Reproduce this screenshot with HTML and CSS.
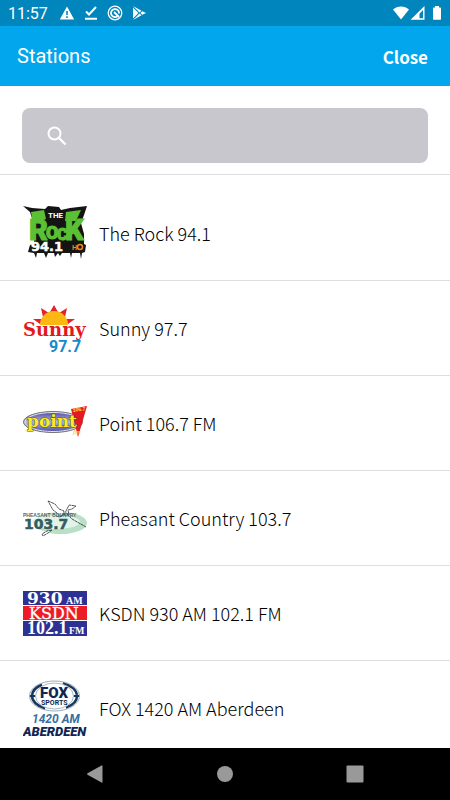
FILE: index.html
```html
<!DOCTYPE html>
<html lang="en">
<head>
    <meta charset="UTF-8">
    <meta name="viewport" content="width=device-width, initial-scale=1.0">
    <title>Stations</title>
    <link rel="stylesheet" href="styles.css">
</head>
<body>
    <div class="status-bar">
        <span class="time">11:57</span>
        <div class="status-icons">
            <svg width="16" height="16" viewBox="0 0 16 16"><path fill="#fff" fill-rule="evenodd" d="M8 1.5L15.2 14.5H.8zM7.2 6v4h1.6V6zM7.2 11.3v1.6h1.6v-1.6z"/></svg>
            <svg width="16" height="16" viewBox="0 0 16 16"><path fill="none" stroke="#fff" stroke-width="2" d="M3 6.5l3 3L13 2M2 13.8h12"/></svg>
            <svg width="16" height="16" viewBox="0 0 16 16"><g fill="none" stroke="#fff"><circle cx="8" cy="8" r="6.8" stroke-width="1.3"/><path stroke-width="1.8" d="M10.5 11.2A4 4 0 1 1 12 8.5"/><path stroke-width="1.8" d="M7 7l5 5"/></g></svg>
            <svg width="16" height="16" viewBox="0 0 16 16"><path fill="#fff" d="M2 1l8.5 4.7-2 1.9zM2 15l8.5-4.7-2-1.9zM2 2.5L7.4 8 2 13.5zM11.3 6.2L15 8l-3.7 1.8L9.4 8z"/></svg>
        </div>
        <div class="signal-icons">
            <svg width="16" height="16" viewBox="0 0 16 16"><path fill="#fff" d="M0 4.5C4.5.6 11.5.6 16 4.5L8 14.5z"/></svg>
            <svg width="16" height="16" viewBox="0 0 16 16"><path fill="#fff" fill-rule="evenodd" d="M14.5 1v13.8H.5zM13 5v8.3H9.5V8.8z"/></svg>
            <svg class="battery" width="10" height="16" viewBox="0 0 10 16"><path fill="#fff" d="M3 1h4v1.5h1.2q.8 0 .8.8v10.7q0 .8-.8.8H1.8q-.8 0-.8-.8V3.3q0-.8.8-.8H3z"/></svg>
        </div>
    </div>

    <header>
        <h1>Stations</h1>
        <button class="close-btn">Close</button>
    </header>

    <form class="search">
        <label class="search-box">
            <svg width="20" height="20" viewBox="0 0 20 20"><circle cx="7.5" cy="7.5" r="6" fill="none" stroke="#fff" stroke-width="2"/><path stroke="#fff" stroke-width="2.4" d="M12 12l6.5 6.5"/></svg>
            <input type="text" aria-label="Search stations">
        </label>
    </form>

    <ul class="stations">
        <li>
            <a href="#">
                <svg class="logo" viewBox="0 0 64 64">
                    <path fill="#141414" d="M0 5l9 2 13 1 3-3 11 1 2 3 9-2 17-2-3 9-3 8 3 11v10l2 1-1 7-3 1-1 6-1-6-8 0-1 5-1-5-8 0-2 3-2-3-3 4-1-4-6 0-2 5-2-5-7 0-1 5-2-5-6-1 2-7 4-1 1-16-5-16z"/>
                    <path fill="#5bc034" d="M8 11l13-2 2 9-13 5zM42 20l1-9 15-2-5 11z"/>
                    <g font-family="Roboto, sans-serif" font-weight="900" fill="#5bc034" stroke="#5bc034" stroke-width="1">
                        <text x="6" y="39" font-size="29">R</text>
                        <text x="23" y="38" font-size="18">O</text>
                        <text x="34" y="39" font-size="16">C</text>
                        <text x="42" y="39" font-size="29">K</text>
                    </g>
                    <text x="25" y="17" font-size="8" font-weight="bold" fill="#fff" font-family="Roboto, sans-serif">THE</text>
                    <text x="8" y="50" font-size="13" font-weight="bold" fill="#fff" stroke="#fff" stroke-width=".5" font-family="'DejaVu Sans', sans-serif">94.1</text>
                    <text x="49" y="49" font-size="7" font-weight="bold" fill="#f0861c" font-family="'Liberation Sans', sans-serif">H</text>
                    <circle cx="57" cy="46" r="2.5" fill="none" stroke="#f0861c" stroke-width="1.5"/>
                </svg>
                <span>The Rock 94.1</span>
            </a>
        </li>
        <li>
            <a href="#">
                <svg class="logo" viewBox="0 0 64 64">
                    <path fill="#e5202a" d="M31 9l-4 7h8zM18 12l2 9 6-4zM44 12l-8 5 6 4zM10 23l7 5 3-5zM52 23l-10 0 3 5z"/>
                    <path fill="#fcb712" d="M17 29a14 14 0 0 1 28 0z"/>
                    <text x="0" y="40" font-size="18" font-weight="bold" fill="#e3171f" stroke="#fff" stroke-width="1" paint-order="stroke" font-family="'DejaVu Serif', serif">Sunny</text>
                    <text x="26" y="56" font-size="16" font-weight="bold" fill="#1689cc" font-family="Roboto, sans-serif">97.7</text>
                </svg>
                <span>Sunny 97.7</span>
            </a>
        </li>
        <li>
            <a href="#">
                <svg class="logo" viewBox="0 0 64 64">
                    <defs>
                        <linearGradient id="point-fill" x1="0" y1="0" x2="0" y2="1">
                            <stop offset="0" stop-color="#45459d"/>
                            <stop offset=".5" stop-color="#b9b9e6"/>
                            <stop offset="1" stop-color="#42429b"/>
                        </linearGradient>
                    </defs>
                    <ellipse cx="30" cy="31" rx="29.5" ry="10.5" fill="url(#point-fill)" stroke="#77766c" stroke-width="1"/>
                    <ellipse cx="30" cy="31" rx="28" ry="9.5" fill="none" stroke="#e5e4ee" stroke-width="1"/>
                    <path fill="#e21b23" d="M48 18l16-3-9 31z"/>
                    <text x="4" y="36" font-size="17" font-weight="bold" fill="#ffea29" stroke="#55552a" stroke-width="1" paint-order="stroke" font-family="'DejaVu Serif', serif">point</text>
                    <text x="50" y="21" font-size="5" font-weight="bold" fill="#ffe632" font-family="'Liberation Sans', sans-serif" transform="rotate(-8 50 21)">106.7</text>
                    <text x="50" y="43" font-size="7" font-weight="bold" font-style="italic" fill="#f6d91c" font-family="'Liberation Serif', serif">fm</text>
                </svg>
                <span>Point 106.7 FM</span>
            </a>
        </li>
        <li>
            <a href="#">
                <svg class="logo" viewBox="0 0 64 64">
                    <ellipse cx="38" cy="37" rx="26" ry="11" fill="#b9dfc7"/>
                    <ellipse cx="33" cy="36" rx="24" ry="7" fill="#e2f3e7"/>
                    <g fill="#fff" stroke="#282828" stroke-width=".8" stroke-dasharray="3 .5">
                        <path d="M25 15l7 3 4 5 5 2-1 4-3 2-3-4-4-3zM41 29l5-10 7 1-4 3-4 1 1 5zM30 28l6 3 8-4"/>
                        <path fill="none" d="M44 28l5 5 14 8"/>
                        <path d="M29 44l-4 3-5 3-1-2 5-3z"/>
                    </g>
                    <text x="0" y="31" font-size="5" font-weight="bold" fill="#4e6a68" font-family="'Liberation Sans', sans-serif">PHEASANT COUNTRY</text>
                    <text x="1" y="43" font-size="14" font-weight="bold" fill="#315d61" stroke="#315d61" stroke-width=".5" font-family="'DejaVu Sans', sans-serif">103.7</text>
                </svg>
                <span>Pheasant Country 103.7</span>
            </a>
        </li>
        <li>
            <a href="#">
                <svg class="logo" viewBox="0 0 64 64">
                    <path fill="#2e3193" d="M0 10h64v14H0zM0 40h64v15H0z"/>
                    <path fill="#ed1c24" d="M0 25h64v14H0z"/>
                    <g fill="#fff" font-family="'DejaVu Serif', serif">
                        <text x="4" y="23" font-size="17" font-weight="bold">930</text>
                        <text x="43" y="23" font-size="10" font-weight="bold" font-family="'Liberation Serif', serif">AM</text>
                        <text x="6" y="38" font-size="16" stroke="#fff" stroke-width=".3">KSDN</text>
                        <text x="4" y="53" font-size="18" font-weight="bold" font-family="'Liberation Serif', serif">102.1</text>
                        <text x="46" y="53" font-size="10" font-weight="bold" font-family="'Liberation Serif', serif">FM</text>
                    </g>
                </svg>
                <span>KSDN 930 AM 102.1 FM</span>
            </a>
        </li>
        <li>
            <a href="#">
                <svg class="logo" viewBox="0 0 64 64">
                    <ellipse cx="31.5" cy="20" rx="25" ry="15" fill="#fff" stroke="#9cabb8" stroke-width="1"/>
                    <ellipse cx="31.5" cy="20" rx="22.5" ry="13.5" fill="none" stroke="#17375f" stroke-width="2.5" stroke-dasharray="17 21 35 21 19"/>
                    <path stroke="#17375f" stroke-width="2" d="M7 20h7M49 20h7"/>
                    <ellipse cx="31.5" cy="20" rx="19" ry="13" fill="#fff" stroke="#a7b8c7" stroke-width="1"/>
                    <g font-family="Roboto, sans-serif" font-weight="bold" fill="#102653">
                        <text x="17" y="22" font-size="15" font-weight="900">FOX</text>
                        <text x="18" y="29" font-size="7">SPORTS</text>
                        <text x="9" y="47" font-size="12" font-style="italic" fill="#376f9e">1420 AM</text>
                        <text x="0" y="60" font-size="13" font-style="italic" font-weight="900">ABERDEEN</text>
                    </g>
                </svg>
                <span>FOX 1420 AM Aberdeen</span>
            </a>
        </li>
    </ul>

    <nav class="nav-bar">
        <button aria-label="Back"><svg width="18" height="18" viewBox="0 0 18 18"><path fill="#999" d="M1.5 8.2L15.5.4q1-.4 1 .6v16q0 1-1 .6L1.5 9.8q-1-.8 0-1.6z"/></svg></button>
        <button aria-label="Home"><svg width="18" height="18" viewBox="0 0 18 18"><circle cx="9" cy="9" r="8" fill="#999"/></svg></button>
        <button aria-label="Recent apps"><svg width="18" height="18" viewBox="0 0 18 18"><rect x=".5" y=".5" width="17" height="17" rx="1" fill="#999"/></svg></button>
    </nav>
</body>
</html>
```
FILE: styles.css
```css
* {
    margin: 0;
    padding: 0;
    box-sizing: border-box;
}
body {
    display: flex;
    flex-direction: column;
    height: 100vh;
    overflow: hidden;
    background-color: #fff;
    color: #000;
    font-family: "Noto Sans CJK SC", "Noto Sans", sans-serif;
}
button {
    background: none;
    border: none;
    cursor: pointer;
}
svg {
    display: block;
}
.status-bar {
    flex: none;
    display: flex;
    align-items: center;
    height: 26px;
    padding: 0 8px;
    background-color: #0085bd;
    color: #fff;
}
.time {
    font-family: Roboto, sans-serif;
    font-size: 16px;
}
.status-icons {
    display: flex;
    gap: 8px;
    margin-left: 11px;
}
.signal-icons {
    display: flex;
    gap: 1px;
    margin-left: auto;
}
.battery {
    margin-left: 5px;
}
header {
    flex: none;
    display: flex;
    justify-content: space-between;
    align-items: center;
    height: 60px;
    padding: 0 22px 0 17px;
    background-color: #02a6ec;
    color: #fff;
}
h1 {
    font-family: Roboto, sans-serif;
    font-size: 20px;
    font-weight: normal;
}
.close-btn {
    color: #fff;
    font-family: inherit;
    font-size: 17px;
    font-weight: bold;
}
.search {
    flex: none;
    padding: 22px 22px 11px;
    border-bottom: 1px solid #dedede;
}
.search-box {
    display: flex;
    align-items: center;
    gap: 12px;
    height: 55px;
    padding: 0 25px;
    border-radius: 8px;
    background-color: #c7c7cd;
}
.search-box input {
    flex: 1;
    min-width: 0;
    background: none;
    border: none;
    outline: none;
    color: #fff;
    font-family: inherit;
    font-size: 18px;
}
.stations {
    flex: 1;
    min-height: 0;
    overflow: hidden;
    padding-top: 11px;
    list-style: none;
}
.stations li {
    height: 95px;
    border-bottom: 1px solid #dedede;
}
.stations a {
    display: flex;
    align-items: center;
    gap: 12px;
    height: 100%;
    padding: 0 23px;
    color: inherit;
    font-size: 18px;
    font-weight: 300;
    text-decoration: none;
}
.logo {
    flex: none;
    width: 64px;
    height: 64px;
}
.nav-bar {
    flex: none;
    display: flex;
    justify-content: space-around;
    align-items: center;
    height: 52px;
    padding: 0 30px;
    background-color: #000;
}
```
